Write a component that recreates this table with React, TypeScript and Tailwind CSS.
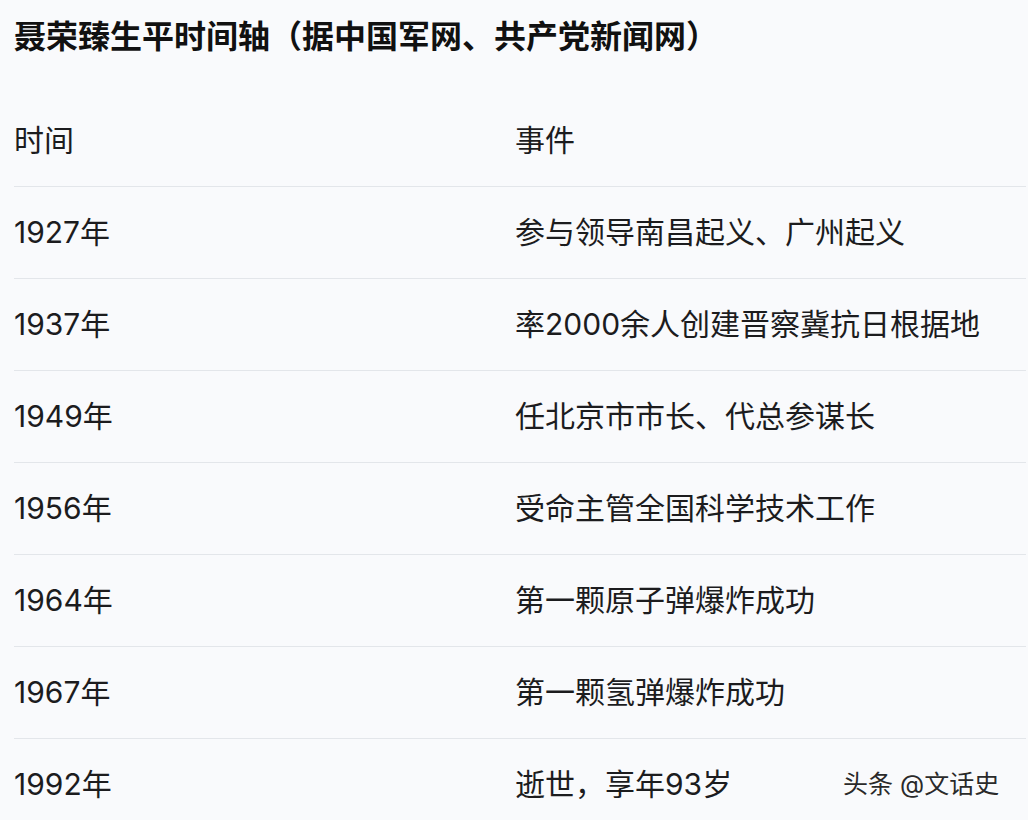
import React from "react";

const rows: [string, string][] = [
  ["1927年", "参与领导南昌起义、广州起义"],
  ["1937年", "率2000余人创建晋察冀抗日根据地"],
  ["1949年", "任北京市市长、代总参谋长"],
  ["1956年", "受命主管全国科学技术工作"],
  ["1964年", "第一颗原子弹爆炸成功"],
  ["1967年", "第一颗氢弹爆炸成功"],
  ["1992年", "逝世，享年93岁"],
];

export default function App() {
  return (
    <div
      className="relative w-[1028px] h-[820px] overflow-hidden bg-[#f9fafc] text-[#1c1c1e]"
      style={{ fontFamily: '"Inter", "Noto Sans CJK SC", sans-serif' }}
    >
      <div className="pl-[14px]">
        <div className="h-[95px] pt-[14px] text-[32px] leading-[46px] font-bold text-[#111]">
          聂荣臻生平时间轴（据中国军网、共产党新闻网）
        </div>
        <div className="flex h-[92px] items-center border-b border-[#e3e6ea] text-[30px] mr-[2px]">
          <div className="w-[501px]">时间</div>
          <div>事件</div>
        </div>
        {rows.map(([t, e]) => (
          <div
            key={t}
            className="flex h-[92px] items-center border-b border-[#e3e6ea] text-[30px] mr-[2px]"
          >
            <div className="w-[501px]">{t}</div>
            <div>{e}</div>
          </div>
        ))}
      </div>
      <div
        className="absolute left-[843px] top-[767px] text-[25px] leading-[34px] text-[#2a2a2a] whitespace-nowrap"
        style={{ textShadow: "0 0 2px #fff, 0 0 2px #fff" }}
      >
        头条 @文话史
      </div>
    </div>
  );
}
